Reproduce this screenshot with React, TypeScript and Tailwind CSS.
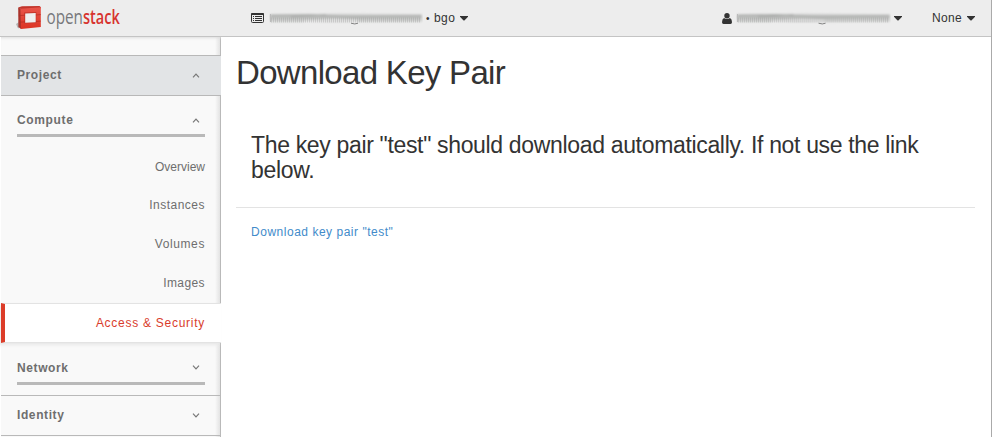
import React from "react";

function Caret() {
  return (
    <svg width="8" height="5" viewBox="0 0 8 5" className="shrink-0" fill="#333">
      <path d="M0 0h8v.8L4.4 4.6h-.8L0 .8z" />
    </svg>
  );
}

function Chevron({ up = false }: { up?: boolean }) {
  return (
    <svg width="8" height="5" viewBox="0 0 8 5" className="mr-[5px] shrink-0" fill="none" stroke="#777" strokeWidth="1.2">
      <path d={up ? "M1 4.3 4 1.2l3 3.1" : "M1 .7 4 3.8 7 .7"} />
    </svg>
  );
}

function Logo() {
  return (
    <svg width="110" height="33" viewBox="0 -4 110 33" className="shrink-0">
      <defs>
        <linearGradient id="cube" x1="0" y1="0" x2="0" y2="1">
          <stop offset="0" stopColor="#e8544a" />
          <stop offset="1" stopColor="#dc3424" />
        </linearGradient>
      </defs>
      <path d="M0 20 3 18v6.500l-1.500-1z" fill="#999" opacity=".7" />
      <path d="M2.200 3.600 6 2.300 23.500 2 25 3.200 24 5H5z" fill="#c2352b" />
      <path d="M2.200 3.600 5 4.800V25l-2.600-2z" fill="#a9332b" />
      <path d="M4.400 4.800 24.800 3.200V23L5 25z" fill="url(#cube)" />
      <path d="M8.200 8.600 20.300 8V18.900L8.200 19.400z" fill="#c5352a" />
      <path d="M9.200 9.500 19.700 9V18.200l-10.500.5z" fill="#efefef" />
      <path d="M3 11.600 8.800 11.200M3 18.200l5.800-.3M19.900 11l4.900-.4M19.900 17.600l4.900-.5" stroke="#b12c22" strokeWidth=".7" />
      <g fontFamily="'Open Sans', sans-serif" fontSize="20.500">
        <text transform="translate(30.500 19.700) scale(.745 1)" fill="#77787b">open</text>
        <text transform="translate(67 19.700) scale(.71 1)" fontWeight="600" fill="#d7332f">stack</text>
      </g>
    </svg>
  );
}

function Smear({ id, width }: { id: string; width: number }) {
  return (
    <svg width={width} height="14" viewBox="0 0 154 14" preserveAspectRatio="none" className="shrink-0">
      <defs>
        <filter id={id + "b"} x="-5%" y="-30%" width="110%" height="160%">
          <feGaussianBlur stdDeviation="0.8" />
        </filter>
        <linearGradient id={id + "g"} x1="0" y1="0" x2="0" y2="1">
          <stop offset="0" stopColor="#dcdcdc" />
          <stop offset=".35" stopColor="#b9bbb9" />
          <stop offset="1" stopColor="#dadbda" />
        </linearGradient>
        <pattern id={id + "p"} width="2" height="14" patternUnits="userSpaceOnUse">
          <path d="M.5 6.500v5" stroke="#999" strokeWidth=".7" />
        </pattern>
      </defs>
      <g filter={`url(#${id}b)`}>
        <path d="M1 3 70 2.500 153 3.200V11L90 11.300H1z" fill={`url(#${id}g)`} />
        <path d="M2 4.500 40 4l42 2 70-1M22 6l35-2" stroke="#a2a4a2" strokeWidth="1" fill="none" />
        <path d="M35 10.500 65 8.800l23 1" stroke="#ececec" strokeWidth="1.600" fill="none" />
      </g>
      <rect x="1" width="151" height="14" fill={`url(#${id}p)`} opacity=".5" />
      <path d="M82 12.200q4 1.500 7 0" stroke="#777" strokeWidth=".9" fill="none" />
      <path d="M1.500 3v8" stroke="#bbb" />
    </svg>
  );
}

const links = [
  { label: "Overview", style: "tracking-[0px]" },
  { label: "Instances", style: "pb-[2px] tracking-[0.5px]" },
  { label: "Volumes", style: "pb-[2px] tracking-[0.6px]" },
  { label: "Images", style: "tracking-[0.4px]" },
];

export default function App() {
  return (
    <div className="flex h-[437px] w-[992px] flex-col overflow-hidden border-r border-[#aaa] bg-white font-['Liberation_Sans',Arial,sans-serif] text-[12px] text-[#333]">
      <header className="flex h-[37px] shrink-0 items-start border-b border-[#c4c4c4] bg-[#ededed]">
        <div className="pl-[16px]"><Logo /></div>
        <div className="ml-[125px] flex h-[36px] items-center">
          <svg width="13" height="10" viewBox="0 0 13 10" className="shrink-0">
            <rect x=".5" y=".5" width="12" height="9" rx="1" fill="none" stroke="#333" />
            <path d="M0 1q0-1 1-1h11q1 0 1 1v1H0z" fill="#333" />
            <path d="M2 3.500h1M4 3.500h7M2 5.500h1M4 5.500h7M2 7.500h1M4 7.500h7" stroke="#333" strokeWidth="1" />
          </svg>
          <div className="ml-[5px]"><Smear id="a" width={154} /></div>
          <span className="ml-[3px] w-[4px] text-[10px]">•</span>
          <span className="ml-[4px] w-[21px] tracking-[0.4px]">bgo</span>
          <span className="ml-[5px]"><Caret /></span>
        </div>
        <div className="ml-auto flex h-[36px] items-center pr-[16px]">
          <svg width="10" height="11" viewBox="0 0 10 11" fill="#333" className="shrink-0">
            <circle cx="5" cy="2.800" r="2.700" />
            <path d="M2 5q3 2.200 6 0 2 .8 2 4.200 0 1.800-1.500 1.800h-7Q0 11 0 9.200 0 5.800 2 5z" />
          </svg>
          <div className="ml-[4px]"><Smear id="u" width={155} /></div>
          <span className="ml-[3px]"><Caret /></span>
          <span className="ml-[30px] w-[30px] tracking-[0.3px]">None</span>
          <span className="ml-[5px]"><Caret /></span>
        </div>
      </header>
      <div className="flex min-h-0 flex-1">
        <nav className="ml-px flex w-[220px] shrink-0 flex-col bg-[#f9f9f9] bg-[linear-gradient(to_left,#b9b9b9_1px,#e3e3e3_1px,#f9f9f9_6px)] text-[#6e6e6e]">
          <div className="h-[18px] shadow-[inset_0_3px_3px_-2px_#ddd]" />
          <div className="flex h-[41px] items-center justify-between border-y border-[#b8b8b8] bg-[#e2e4e6] px-[16px] font-bold tracking-[0.6px]">
            <span className="pb-[2px]">Project</span><Chevron up />
          </div>
          <div className="mx-[16px] flex h-[41px] items-center justify-between border-b-[3px] border-[#b9b9b9] pt-[10px] font-bold tracking-[0.65px]">
            <span>Compute</span><Chevron up />
          </div>
          <div className="flex h-[166px] flex-col pt-[11px]">
            {links.map((link) => (
              <a key={link.label} className={`flex h-[38.7px] items-center justify-end pr-[16px] ${link.style}`}>{link.label}</a>
            ))}
          </div>
          <a className="flex h-[40px] items-center justify-end border-y border-l-4 border-y-[#e3e3e3] border-l-[#dc3c28] bg-white pr-[16px] tracking-[0.73px] text-[#d93c2c] shadow-[-2px_2px_3px_#e8e8e8]">Access &amp; Security</a>
          <div className="mx-[16px] flex h-[42px] items-center justify-between border-b-[3px] border-[#b9b9b9] pt-[10px] font-bold tracking-[0.6px]">
            <span>Network</span><Chevron />
          </div>
          <div className="h-[11px] border-b border-[#b9b9b9]" />
          <div className="flex h-[40px] items-center justify-between border-b border-[#b9b9b9] px-[16px] font-bold tracking-[0.6px]">
            <span className="pb-[2px]">Identity</span><Chevron />
          </div>
        </nav>
        <main className="flex-1 pt-[16px] pr-[16px] pl-[15px]">
          <h1 className="text-[33px] leading-[40px] tracking-[-0.68px] whitespace-nowrap">Download Key Pair</h1>
          <div className="mt-[40px] border-b border-[#e3e3e3] pb-[24px] pl-[15px]">
            <h2 className="text-[23px] leading-[25px] tracking-[-0.335px]">The key pair "test" should download automatically. If not use the link<br />below.</h2>
          </div>
          <a className="mt-[16px] ml-[15px] block leading-[16px] tracking-[0.52px] whitespace-nowrap text-[#428bca]">Download key pair "test"</a>
        </main>
      </div>
    </div>
  );
}
